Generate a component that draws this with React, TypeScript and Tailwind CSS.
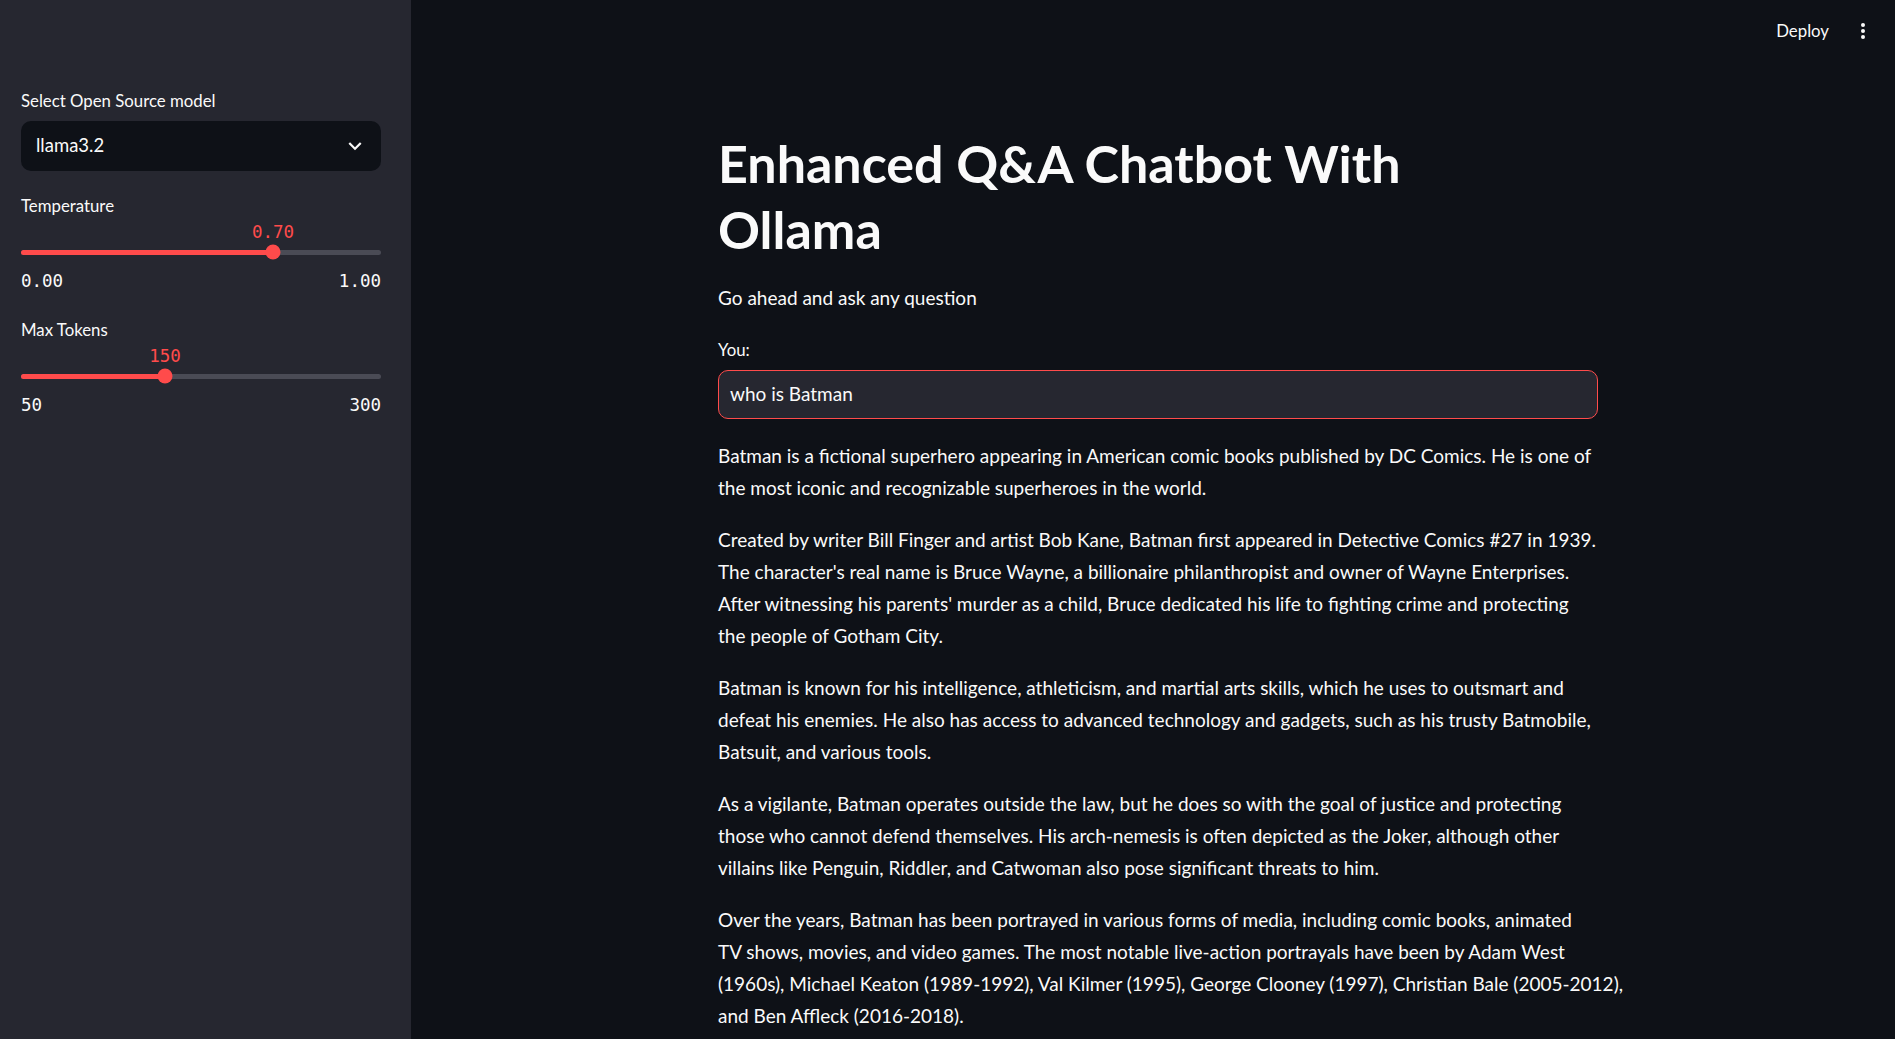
const answer: string[][] = [
  [
    'Batman is a fictional superhero appearing in American comic books published by DC Comics. He is one of',
    'the most iconic and recognizable superheroes in the world.',
  ],
  [
    'Created by writer Bill Finger and artist Bob Kane, Batman first appeared in Detective Comics #27 in 1939.',
    "The character's real name is Bruce Wayne, a billionaire philanthropist and owner of Wayne Enterprises.",
    "After witnessing his parents' murder as a child, Bruce dedicated his life to fighting crime and protecting",
    'the people of Gotham City.',
  ],
  [
    'Batman is known for his intelligence, athleticism, and martial arts skills, which he uses to outsmart and',
    'defeat his enemies. He also has access to advanced technology and gadgets, such as his trusty Batmobile,',
    'Batsuit, and various tools.',
  ],
  [
    'As a vigilante, Batman operates outside the law, but he does so with the goal of justice and protecting',
    'those who cannot defend themselves. His arch-nemesis is often depicted as the Joker, although other',
    'villains like Penguin, Riddler, and Catwoman also pose significant threats to him.',
  ],
  [
    'Over the years, Batman has been portrayed in various forms of media, including comic books, animated',
    'TV shows, movies, and video games. The most notable live-action portrayals have been by Adam West',
    '(1960s), Michael Keaton (1989-1992), Val Kilmer (1995), George Clooney (1997), Christian Bale (2005-2012),',
    'and Ben Affleck (2016-2018).',
  ],
];

const sans = "font-['Lato','Noto_Sans',sans-serif]";
const mono = "font-['DejaVu_Sans_Mono',monospace]";

function Slider({ label, value, min, max, fmt }: { label: string; value: number; min: number; max: number; fmt: (n: number) => string }) {
  const pct = ((value - min) / (max - min)) * 100;
  return (
    <div>
      <div className="h-6 leading-6 text-[16.8px] text-[#fafafa]">{label}</div>
      <div className={`relative h-[25px] ${mono} text-[17.5px] leading-6 text-[#ff4b4b]`}>
        <span className="absolute top-[2px] -translate-x-1/2" style={{ left: `${pct}%` }}>{fmt(value)}</span>
      </div>
      <div className="relative flex h-[18px] items-center">
        <div className="h-[5px] w-full rounded-full bg-[#4a4b55]">
          <div className="h-full rounded-full bg-[#ff4b4b]" style={{ width: `${pct}%` }} />
        </div>
        <div
          className="absolute top-1/2 h-[15px] w-[15px] -translate-x-1/2 -translate-y-1/2 rounded-full bg-[#ff4b4b]"
          style={{ left: `${pct}%` }}
        />
      </div>
      <div className={`mt-[7px] flex h-6 justify-between ${mono} text-[17.5px] leading-6 text-[#fafafa]`}>
        <span className="relative top-px">{fmt(min)}</span>
        <span className="relative top-px">{fmt(max)}</span>
      </div>
    </div>
  );
}

export default function App() {
  return (
    <div className={`flex h-screen w-full overflow-hidden bg-[#0e1117] text-[#fafafa] ${sans}`}>
      {/* Sidebar */}
      <aside className="w-[411px] shrink-0 bg-[#262730] pl-[21px] pr-[30px] pt-[89px]">
        <div className="h-6 leading-6 text-[16.8px]">Select Open Source model</div>
        <div className="mt-2 flex h-[50px] items-center justify-between rounded-[10px] bg-[#0e1117] pl-[15px] pr-[13px]">
          <span className="text-[18.5px]">llama3.2</span>
          <svg viewBox="0 0 24 24" className="h-[26px] w-[26px]" fill="#fafafa">
            <path d="M16.59 8.59L12 13.17 7.41 8.59 6 10l6 6 6-6z" />
          </svg>
        </div>

        <div className="mt-[23px]">
          <Slider label="Temperature" value={0.7} min={0} max={1} fmt={n => n.toFixed(2)} />
        </div>
        <div className="mt-[26px]">
          <Slider label="Max Tokens" value={150} min={50} max={300} fmt={n => String(n)} />
        </div>
      </aside>

      {/* Main */}
      <main className="relative flex-1 overflow-hidden">
        <header className="flex h-[62px] items-center justify-end gap-[32px] pr-[30px]">
          <span className="text-[16.8px]">Deploy</span>
          <svg viewBox="0 0 4 16" className="h-4 w-1" fill="#fafafa">
            <circle cx="2" cy="2" r="2" />
            <circle cx="2" cy="8" r="2" />
            <circle cx="2" cy="14" r="2" />
          </svg>
        </header>

        <div className="ml-[307px] w-[880px]">
          <h1 className="mt-[68px] text-[52px] font-bold leading-[66px]">
            Enhanced Q&amp;A Chatbot With
            <br />
            Ollama
          </h1>

          <p className="mt-5 text-[19px] leading-8">Go ahead and ask any question</p>

          <div className="mt-[24px] h-6 leading-6 text-[16.8px]">You:</div>
          <div className="mt-[8px] flex h-[49px] items-center rounded-[10px] border border-[#ff4b4b] bg-[#262730] px-[11px] text-[19px]">
            who is Batman
          </div>

          <div className="mt-[21px] flex flex-col gap-5">
            {answer.map((para, i) => (
              <p key={i} className="text-[19px] leading-8">
                {para.map(line => (
                  <span key={line} className="block whitespace-nowrap">{line}</span>
                ))}
              </p>
            ))}
          </div>
        </div>
      </main>
    </div>
  );
}
